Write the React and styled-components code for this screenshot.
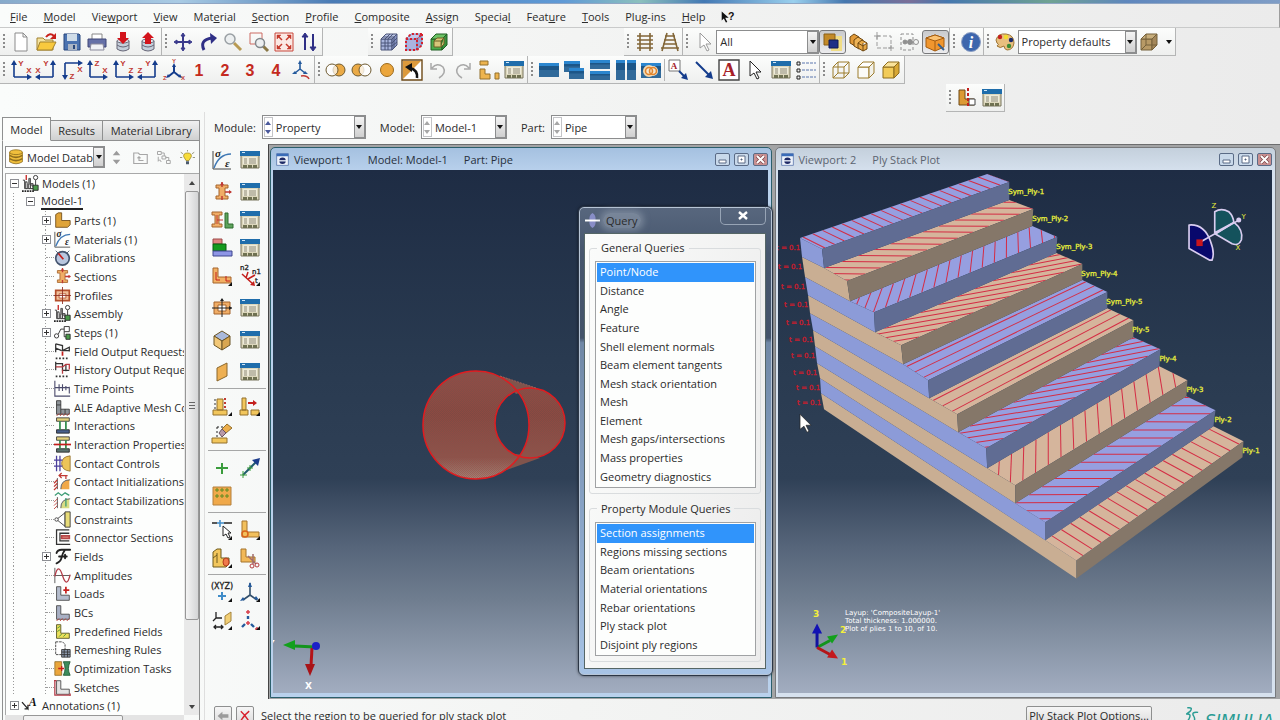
import styled, { createGlobalStyle, css } from "styled-components";

const GlobalStyle = createGlobalStyle`
  * { box-sizing: border-box; }
  body {
    margin: 0;
    overflow: hidden;
    font-family: "Open Sans", "Noto Sans", sans-serif;
    font-size: 11px;
    color: #2b2b2b;
  }
  button, select, legend {
    font: inherit;
    color: inherit;
    padding: 0;
    margin: 0;
    border: 0;
    background: none;
  }
  ul { list-style: none; margin: 0; padding: 0; }
  svg { display: block; flex: none; }
`;

/* ---------- icon drawings, all on a 20 x 20 grid ---------- */

const cube = (front, top, side, line) => (
  <g stroke={line} strokeLinejoin="round">
    <path d="M2 7h11v11H2z" fill={front} />
    <path d="M2 7l5-5h11l-5 5z" fill={top} />
    <path d="M13 7l5-5v11l-5 5z" fill={side} />
  </g>
);

const axes = (v, h, flip, down) => {
  const x = flip ? 17 : 3;
  const y = down ? 3 : 17;
  const d = flip ? -1 : 1;
  const e = down ? 1 : -1;
  return (
    <g>
      <path d={`M${x} ${y}v${e * 13}M${x} ${y}h${d * 14}`} stroke="#143c8c" strokeWidth="1.6" fill="none" />
      <path
        d={`M${x - 3} ${y + e * 12}h6l-3 ${e * 5}zM${x + d * 13} ${y - 3}v6l${d * 5} -3z`}
        fill="#143c8c"
      />
      <g fill="#c03a34" fontSize="8" fontWeight="bold" fontFamily="Liberation Sans, sans-serif" textAnchor="middle">
        <text x={x + d * 7} y={down ? 19 : 6}>{v}</text>
        <text x={x + d * 15} y={down ? 12 : 13}>{h}</text>
      </g>
    </g>
  );
};

const digit = (n) => (
  <text x="10" y="16" textAnchor="middle" fill="#c42a20" fontSize="16" fontWeight="bold" fontFamily="Liberation Sans, sans-serif">
    {n}
  </text>
);

const pane = (x, y, w, h) => (
  <g>
    <rect x={x} y={y} width={w} height={h} fill="#1c5688" />
    <rect x={x} y={y} width={w} height="3" fill="#2b86cf" />
    <rect x={x} y={y + h / 2} width={w} height={h / 2} fill="#3f78a6" opacity=".6" />
  </g>
);

const ell = (fill, line) => <path d="M3 2h5v10h10v6H3z" fill={fill} stroke={line} />;
const beam = <path d="M4 3h12v3h-3v8h3v3H4v-3h3V6H4z" fill="#f0ad66" stroke="#a5642c" />;
const ground = <path d="M3 20l3-3M7 20l3-3M11 20l3-3M15 20l3-3" stroke="#c03a34" />;
const more = <path d="M20 16v4h-4z" fill="#111" />;

const drawings = {
  file: <path d="M4 1h8l4 4v14H4zM12 1v4h4" fill="#fff" stroke="#8b8b8b" />,
  open: (
    <g>
      <path d="M1 6h6l2 2h8v10H1z" fill="#f4e3a0" stroke="#a1812f" />
      <path d="M4 10h16l-4 8H1z" fill="#f8c93e" stroke="#a1812f" />
      <path d="M10 5q4-5 8-1" stroke="#c8201c" strokeWidth="2" fill="none" />
      <path d="M20 1v6h-6z" fill="#c8201c" />
    </g>
  ),
  save: (
    <g>
      <path d="M2 2h15l1 1v15H2z" fill="#4a72b0" stroke="#28477c" />
      <path d="M5 2h10v7H5z" fill="#cfdce8" />
      <path d="M6 12h9v6H6z" fill="#a9b4c4" />
      <path d="M11 13h2v4h-2z" fill="#28477c" />
    </g>
  ),
  print: (
    <g>
      <path d="M5 2h10v6H5z" fill="#fff" stroke="#888" />
      <path d="M1 7h18v8H1z" fill="#6671a8" stroke="#3e4777" />
      <path d="M4 12h12l1 6H3z" fill="#f2f3f7" stroke="#8a8a9b" />
    </g>
  ),
  dbIn: (
    <g>
      <path d="M4 9v8q6 4 12 0V9" fill="#c5cfdb" stroke="#667" />
      <path d="M4 13q6 4 12 0" fill="none" stroke="#667" />
      <ellipse cx="10" cy="9" rx="6" ry="2" fill="#e5eaf0" stroke="#667" />
      <path d="M7 0h6v6h3l-6 6-6-6h3z" fill="#d3141c" />
    </g>
  ),
  dbOut: (
    <g>
      <path d="M4 9v8q6 4 12 0V9" fill="#c5cfdb" stroke="#667" />
      <path d="M4 13q6 4 12 0" fill="none" stroke="#667" />
      <ellipse cx="10" cy="9" rx="6" ry="2" fill="#e5eaf0" stroke="#667" />
      <path d="M7 12h6V6h3l-6-6-6 6h3z" fill="#d3141c" />
    </g>
  ),
  pan: (
    <g stroke="#3b3b8c" strokeWidth="2" fill="#3b3b8c">
      <path d="M10 3v14M3 10h14" />
      <path d="M10 1l2 3H8zM10 19l2-3H8zM1 10l3 2V8zM19 10l-3 2V8z" strokeWidth="1" />
    </g>
  ),
  rotate: (
    <g>
      <path d="M6 18Q1 8 14 6" stroke="#2f2f86" strokeWidth="3" fill="none" />
      <path d="M12 1l7 5-6 6z" fill="#2f2f86" />
    </g>
  ),
  zoom: (
    <g>
      <path d="M11 11l7 7" stroke="#b89a52" strokeWidth="3" />
      <circle cx="7" cy="7" r="5" fill="#eceff0" stroke="#9aa0a4" strokeWidth="1.5" />
    </g>
  ),
  zoomBox: (
    <g>
      <path d="M1 1h12v11H1z" fill="none" stroke="#cc6a62" />
      <path d="M14 14l5 5" stroke="#8a7846" strokeWidth="3" />
      <circle cx="11" cy="11" r="4.5" fill="#eceff0" stroke="#82888c" strokeWidth="1.5" />
    </g>
  ),
  fit: (
    <g>
      <path d="M1 1h18v18H1z" fill="#fbe9e4" stroke="#c8473a" />
      <g fill="#c53a2c" stroke="#c53a2c" strokeWidth="1.5">
        <path d="M8 8L4 4M12 8l4-4M8 12l-4 4M12 12l4 4" />
        <path d="M3 3h4L3 7zM17 3h-4l4 4zM3 17h4l-4-4zM17 17h-4l4-4z" strokeWidth=".5" />
      </g>
    </g>
  ),
  cycle: (
    <g stroke="#2f2f86" strokeWidth="2" fill="#2f2f86">
      <path d="M6 4v14M14 2v14" />
      <path d="M6 1l3 4H3zM14 19l3-4h-6z" strokeWidth="1" />
    </g>
  ),
  meshCube: (
    <g>
      {cube("#a8b4dc", "#bcc6e6", "#8794c4", "#4b5578")}
      <path d="M6 7v11M9 7v11M2 11h11l5-5M2 14h11l5-4M4 5h11v11M9 7l5-5M6 7l5-5" stroke="#4b5578" fill="none" />
    </g>
  ),
  nodeCube: (
    <g>
      {cube("#aab4e0", "#c2caec", "#98a3d4", "#7c86b8")}
      <path d="M2 7h11v11H2zM2 7l5-5h11l-5 5M18 2v11l-5 5" fill="none" stroke="#d5202c" strokeWidth="2" strokeDasharray="2 2" />
    </g>
  ),
  greenCube: (
    <g>
      {cube("#4cab4a", "#6cc265", "#3a8f3c", "#1f5f22")}
      <path d="M5 9h7v6H5zM5 9l3-3h7l-3 3M15 6v6l-3 3" fill="#d8c67a" stroke="#6e6125" />
    </g>
  ),
  ladder: <path d="M5 1v18M15 1v18M2 4h16M2 8h16M2 12h16M2 16h16" stroke="#826638" strokeWidth="1.6" />,
  ladderFar: <path d="M7 1L2 19M13 1l5 18M5 4h10M4 8h12M3 12h14M1 16h18" stroke="#826638" strokeWidth="1.6" />,
  pointer: <path d="M6 1v15l4-3 3 6 2-1-3-6h5z" fill="#fff" stroke="#9a9a9a" />,
  pointerDark: <path d="M5 1v15l4-3 3 6 2-1-3-6h5z" fill="#fff" stroke="#222" />,
  overlap: (
    <g>
      <path d="M8 8V4h11v15H8z" fill="#f0dd86" />
      <path d="M1 2h11v11H1z" fill="#c38a28" stroke="#8a5f17" />
      <path d="M6 8h9v8H6z" fill="#1f2f86" stroke="#111a55" />
    </g>
  ),
  boxes: (
    <g stroke="#6e4710">
      <path d="M1 5l4-3 5 3v6l-4 3-5-3z" fill="#e29a38" />
      <path d="M5 8l4-3 5 3v6l-4 3-5-3z" fill="#eeb458" />
      <path d="M9 11l4-3 5 3v6l-4 2-5-3zM9 11l5 3 4-3M14 14v5" fill="#e8a846" />
    </g>
  ),
  selRect: (
    <g>
      <path d="M3 4h14v12H3z" fill="none" stroke="#9b9b9b" strokeDasharray="4 2" />
      <path d="M3 0v7M0 4h6M17 13v6M14 16h6" stroke="#9b9b9b" />
    </g>
  ),
  selShapes: (
    <g fill="#8f8f8f" stroke="#8f8f8f">
      <path d="M2 2h12v16H2z" fill="none" strokeDasharray="3 2" />
      <circle cx="6" cy="10" r="2" />
      <circle cx="11" cy="10" r="2.5" />
      <circle cx="17" cy="10" r="2.5" fill="none" />
    </g>
  ),
  orangeBox: (
    <g stroke="#a45c10">
      <path d="M1 6l9-3 9 3v9l-9 4-9-4z" fill="#f0962e" />
      <path d="M1 6l9-3 9 3-9 3z" fill="#fbc272" />
      <path d="M10 9v10" />
      <path d="M13 12l6 6" stroke="#355f8e" strokeWidth="2" />
    </g>
  ),
  info: (
    <g>
      <circle cx="10" cy="10" r="9.5" fill="#3d66ad" stroke="#8da0c4" />
      <text x="10" y="16" textAnchor="middle" fill="#fff" fontSize="16" fontStyle="italic" fontWeight="bold" fontFamily="Liberation Serif, serif">i</text>
    </g>
  ),
  palette: (
    <g>
      <path d="M1 8Q3 1 11 2q8 1 8 9-1 7-7 7-3-1-3-4-4 3-7 0 3-2 0-3z" fill="#e8bf7e" stroke="#9c7434" />
      <circle cx="5" cy="5" r="2.2" fill="#c41f1c" />
      <circle cx="11" cy="5" r="2.2" fill="#f2dc2c" />
      <circle cx="16" cy="8" r="2.2" fill="#1b2a6b" />
      <circle cx="14" cy="14" r="2.2" fill="#3c8c34" />
    </g>
  ),
  tanCube: (
    <g>
      {cube("#b89a66", "#c8ae7c", "#a4875a", "#74603a")}
      <path d="M7 2v11h11M7 13l-5 5" stroke="#74603a" fill="none" />
    </g>
  ),
  triad: (
    <g>
      <path d="M10 12V6M10 12l-5 4M10 12l5 4" stroke="#143c8c" strokeWidth="2" />
      <path d="M10 3l2 4H8zM2 18l2-4 2 3zM18 18l-2-4-2 3z" fill="#143c8c" />
      <g fill="#c03a34" fontSize="6" fontWeight="bold" fontFamily="Liberation Sans, sans-serif">
        <text x="8" y="3">Y</text>
        <text x="-1" y="20">Z</text>
        <text x="17" y="20">X</text>
      </g>
    </g>
  ),
  triadTurn: (
    <g>
      <path d="M9 9V3M9 9l-5 4M9 9l5 4" stroke="#245a9c" strokeWidth="1.6" />
      <path d="M9 0l2 4H7zM1 14l3-3 2 3zM17 14l-3-3-2 3z" fill="#245a9c" />
      <path d="M10 16q6-1 8 3" stroke="#c03a34" strokeWidth="1.6" fill="none" />
    </g>
  ),
  union: (
    <g stroke="#6e5a30">
      <circle cx="13" cy="10" r="6" fill="#eaaa46" />
      <circle cx="6" cy="10" r="6" fill="#fff" fillOpacity=".7" />
    </g>
  ),
  minus: (
    <g stroke="#6e5a30">
      <circle cx="7" cy="10" r="6" fill="#eaaa46" />
      <circle cx="14" cy="10" r="6" fill="#fff" fillOpacity=".8" />
    </g>
  ),
  disc: <circle cx="10" cy="10" r="6.5" fill="#eba63c" stroke="#9c6a1c" />,
  invert: (
    <g>
      <path d="M0 0h20v20H0z" fill="#fff" stroke="#6e4a18" strokeWidth="1.4" />
      <path d="M1 1h18L1 19z" fill="#dc9a3c" />
      <path d="M15 18q1-8-7-10" stroke="#111" strokeWidth="2.6" fill="none" />
      <path d="M3 7l7-4v9z" fill="#111" />
    </g>
  ),
  undo: <path d="M3 3v6h6M4 8q5-6 11-1 4 6-4 11" stroke="#a9a9a9" strokeWidth="1.5" fill="none" />,
  redo: <path d="M17 3v6h-6M16 8Q11 2 5 7q-4 6 4 11" stroke="#a9a9a9" strokeWidth="1.5" fill="none" />,
  parts: <path d="M1 1h8v4H1zM1 9h5v5h5v5H1zM16 13h4v6h-4z" fill="#edb44e" stroke="#93702c" />,
  table: (
    <g>
      <path d="M1 2h18v16H1z" fill="#dcd7bc" stroke="#79745c" />
      <path d="M0 1h20v5H0z" fill="#1f6dab" />
      <path d="M2 2h3v1H2z" fill="#cfe6f8" />
      <path d="M3 7h14v7H3z" fill="#eeebda" />
      <path d="M4 9h3M9 9h7M4 11h3M9 11h7M4 13h3M9 13h7" stroke="#8f8b78" />
      <path d="M3 15h4v3H3zM8 15h4v3H8zM13 15h4v3h-4z" fill="#6f7152" />
    </g>
  ),
  pane1: pane(0, 3, 20, 14),
  pane2: <g>{pane(0, 1, 16, 11)}{pane(5, 8, 15, 11)}</g>,
  pane3: <g>{pane(0, 0, 20, 9)}{pane(0, 11, 20, 9)}</g>,
  pane4: <g>{pane(0, 0, 9, 20)}{pane(11, 0, 9, 20)}</g>,
  linkPane: (
    <g>
      {pane(0, 3, 20, 15)}
      <circle cx="8" cy="11" r="5" fill="#f3e6d0" stroke="#f3d9b0" strokeWidth="2" />
      <circle cx="12" cy="11" r="5" fill="#f3e6d0" />
      <circle cx="8" cy="11" r="3.5" fill="none" stroke="#e2852c" strokeWidth="1.6" />
      <circle cx="12" cy="11" r="3.5" fill="none" stroke="#e2852c" strokeWidth="1.6" />
    </g>
  ),
  noteArrow: (
    <g>
      <path d="M1 0h11v11H1z" fill="#fff" stroke="#777" />
      <text x="6" y="9" textAnchor="middle" fontSize="9" fontWeight="bold" fill="#a62028" fontFamily="Liberation Serif, serif">A</text>
      <path d="M11 11l5 5" stroke="#143c8c" strokeWidth="2" />
      <path d="M20 20l-7-2 5-5z" fill="#143c8c" />
    </g>
  ),
  arrow: (
    <g>
      <path d="M2 2l13 13" stroke="#143c8c" strokeWidth="2" />
      <path d="M19 19l-8-2 6-6z" fill="#143c8c" />
    </g>
  ),
  letter: (
    <g>
      <path d="M0 0h20v20H0z" fill="#fff" stroke="#444" strokeWidth="1.4" />
      <text x="10" y="16" textAnchor="middle" fontSize="18" fontWeight="bold" fill="#a62028" fontFamily="Liberation Serif, serif">A</text>
    </g>
  ),
  legend: (
    <g>
      <path d="M1 2h3v3H1zM1 9h3v3H1zM1 16h3v3H1z" fill="#eee" stroke="#222" />
      <path d="M6 3h14M6 10h14M6 17h14" stroke="#5b76ae" strokeDasharray="3 1" />
    </g>
  ),
  wire: (
    <g stroke="#9c7c2c" fill="none">
      <path d="M2 7h11v11H2zM2 7l5-5h11l-5 5M18 2v11l-5 5M7 2v11h11M7 13l-5 5" />
    </g>
  ),
  hidden: cube("#fbfbf8", "#fff", "#f2f1ea", "#9c7c2c"),
  shaded: cube("#f2cb58", "#fae39a", "#d8a836", "#8d6c1c"),
  partAxis: (
    <g>
      <path d="M2 2h6v9h9v6H2z" fill="#dc9a34" stroke="#6e4a18" />
      <path d="M12 11h6v6h-6z" fill="#fff" stroke="#444" />
      <path d="M11 0v20" stroke="#c41f1c" strokeWidth="2" strokeDasharray="3 2" />
    </g>
  ),
  database: (
    <g fill="#f0bf3c" stroke="#8d6c1c">
      <path d="M2 4v12q8 5 16 0V4" />
      <path d="M2 8q8 5 16 0M2 12q8 5 16 0" fill="none" strokeWidth="2" />
      <ellipse cx="10" cy="4" rx="8" ry="3" />
    </g>
  ),
  updown: <path d="M10 1l5 6H5zM10 19l5-6H5z" fill="#9b9b9b" />,
  folderUp: (
    <g fill="none" stroke="#a6a6a6" strokeWidth="1.5">
      <path d="M1 4h6l2 2h10v12H1z" />
      <path d="M14 14H8V9M6 11l2-2 2 2" />
    </g>
  ),
  links: (
    <g fill="none" stroke="#a6a6a6" strokeWidth="1.3">
      <path d="M2 2h5v4H2zM8 8h5v4H8zM14 14h5v4h-5zM7 4h4v4M13 10h4v4M3 9v6l2-2 2 3" />
    </g>
  ),
  bulb: (
    <g>
      <path d="M10 4q6 0 5 5l-3 5H8L5 9q-1-5 5-5z" fill="#f7dc3a" stroke="#9c8420" />
      <path d="M8 15h4v4H8z" fill="#4b5a6c" />
      <path d="M10 0v2M1 3l3 2M19 3l-3 2M0 10h3M17 10h3" stroke="#7a7a5c" />
    </g>
  ),
  models: (
    <g>
      <path d="M5 0v6" stroke="#c41f1c" strokeWidth="1.5" />
      <path d="M1 6h2v10h12M4 8h2v8H4zM8 4h2v12H8zM10 10h3v6h-3z" fill="#888" stroke="#444" />
      <path d="M0 19h14" stroke="#222" strokeWidth="2" strokeDasharray="2 1" />
      <circle cx="16" cy="3" r="2.5" fill="#fff" stroke="#222" />
      <path d="M16 6v6" stroke="#222" />
      <path d="M13 12h6v6h-6z" fill="#4b9a4b" stroke="#222" />
    </g>
  ),
  partL: <path d="M2 3l3-2h4v9h10v5l-3 3H2z" fill="#dfa43a" stroke="#6e4a18" />,
  stress: (
    <g>
      <path d="M1 1v18h18" stroke="#444" fill="none" />
      <path d="M2 18Q7 4 19 4" stroke="#3f78b4" strokeWidth="1.5" fill="none" />
      <g fontSize="11" fontStyle="italic" fontWeight="bold" fill="#222" fontFamily="Liberation Serif, serif">
        <text x="3" y="7">σ</text>
        <text x="13" y="17">ε</text>
      </g>
    </g>
  ),
  gauge: (
    <g>
      <circle cx="10" cy="11" r="8" fill="#b8c6de" stroke="#44546e" strokeWidth="2" />
      <path d="M5 5l6 7" stroke="#c41f1c" strokeWidth="2" />
      <path d="M2 2l3 3M18 2l-3 3" stroke="#44546e" />
    </g>
  ),
  section: (
    <g>
      {beam}
      <path d="M10 0v5M13 10h6M10 14v4" stroke="#c03a34" strokeWidth="1.5" />
      <path d="M10 0l2 3H8zM20 10l-3-2v4z" fill="#c03a34" />
    </g>
  ),
  sectionL: (
    <g>
      <path d="M0 2h10v3H7v9h3v3H0v-3h3V5H0z" fill="#f0ad66" stroke="#a5642c" />
      <path d="M5 5v9M5 10h6" stroke="#c03a34" />
      <path d="M13 3h3v11h5v4h-8z" fill="#5da35c" stroke="#2e6c2e" />
    </g>
  ),
  layers: (
    <g>
      <path d="M1 1h9v5H1z" fill="#e08482" stroke="#9c4a48" />
      <path d="M1 6h13v7H1z" fill="#159a1e" stroke="#0b5c12" />
      <path d="M1 13h19v5H1z" fill="#8e96e6" stroke="#3e468e" />
    </g>
  ),
  orient: (
    <g>
      <path d="M1 2h5v9h13v6H1z" fill="#f2b064" stroke="#a5642c" />
      <path d="M4 6v8M4 14h4M14 10v5h4" stroke="#c41f1c" fill="none" />
      {more}
    </g>
  ),
  tangent: (
    <g>
      <path d="M2 8l11 10M6 12l2-6M8 13l7-4" stroke="#c41f1c" strokeWidth="1.5" />
      <path d="M15 20l-5-1 4-4z" fill="#c41f1c" />
      <g fontSize="7" fill="#222" stroke="#222" strokeWidth=".3" fontFamily="DejaVu Sans, sans-serif">
        <text x="0" y="4">n2</text>
        <text x="12" y="8">n1</text>
        <text x="15" y="17">t</text>
      </g>
      {more}
    </g>
  ),
  profile: (
    <g>
      <path d="M2 4h16v12H2z" fill="#f0ad66" stroke="#a5642c" />
      <path d="M6 7h8v6H6z" fill="#fff" stroke="#a5642c" />
      <path d="M10 1v18M0 10h20" stroke="#222" />
      <path d="M10 0l2 3H8zM20 10l-3-2v4z" fill="#222" />
    </g>
  ),
  profileRed: (
    <g>
      <path d="M2 4h16v12H2z" fill="#f0c09c" stroke="#b4502c" strokeWidth="2" />
      <path d="M6 8h8v5H6z" fill="#fff" stroke="#b4502c" />
      <path d="M10 0v20M0 10h20" stroke="#8c2c20" />
    </g>
  ),
  steps: (
    <g fill="#fff" stroke="#222">
      <circle cx="3" cy="14" r="2.5" />
      <path d="M5 12l3-6h4M12 3h6v6h-6z" />
      <path d="M14 12h5v6h-5z" fill="#4b9a4b" />
      <path d="M12 9v6h2" fill="none" />
    </g>
  ),
  output: (
    <g>
      <path d="M2 1v10M2 1l8 2v6l8 0M2 6l7 3M10 9l8-4v5" stroke="#333" fill="none" strokeWidth="1.5" />
      <path d="M10 10v5" stroke="#c41f1c" strokeWidth="2" />
      <path d="M2 18h16" stroke="#333" strokeWidth="2" strokeDasharray="2 2" />
    </g>
  ),
  outputRed: (
    <g>
      <path d="M2 1v10M2 3h8v8h8M14 4v8" stroke="#333" fill="none" strokeWidth="1.5" />
      <path d="M2 7h8l4-3h4v6M10 10v5" stroke="#b83a40" strokeWidth="1.5" fill="none" />
      <path d="M2 18h16" stroke="#333" strokeWidth="2" strokeDasharray="2 2" />
    </g>
  ),
  timePoints: <path d="M1 1v18h18M1 9h17M6 5v8M10 5v8M14 7v5M18 8v8" stroke="#4b4b6c" fill="none" strokeWidth="1.3" />,
  ale: <g>{ell("#8f959a", "#333")}<path d="M3 7h5M8 12v6M13 12v6" stroke="#333" />{ground}</g>,
  interact: (
    <g>
      <path d="M3 1h15v4H3z" fill="#e4d27c" stroke="#333" />
      <path d="M3 15h15v4H3z" fill="#48608c" stroke="#222" />
      <path d="M7 5v10M14 5v10" stroke="#2f8c4a" strokeWidth="2" />
    </g>
  ),
  interactProp: (
    <g>
      <path d="M3 1h15v4H3z" fill="#e4d27c" stroke="#333" />
      <path d="M3 15h15v4H3z" fill="#5c7470" stroke="#222" />
      <path d="M7 5v10M14 5v10" stroke="#2f8c4a" strokeWidth="2" />
      <path d="M0 10h20" stroke="#c41f1c" strokeWidth="2" />
    </g>
  ),
  contact: (
    <g>
      <path d="M19 1q-10 1-10 9t10 9z" fill="#ecc458" stroke="#93702c" />
      <path d="M3 1v18M7 1v18M0 6h10M0 13h10" stroke="#4b3f9c" strokeWidth="1.5" />
    </g>
  ),
  contactInit: (
    <g>
      <path d="M18 8q-9 1-10 11h10z" fill="#f0a848" />
      <path d="M8 19Q8 8 19 8M4 6v13" stroke="#444" fill="none" />
      <path d="M0 12l4-4M0 16l4-4M0 20l4-4M16 3H6M9 0L6 3l3 3M14 3v4" stroke="#c03a34" fill="none" strokeWidth="1.5" />
    </g>
  ),
  contactStab: (
    <g>
      <path d="M18 8q-9 1-10 11h10z" fill="#d8dc84" />
      <path d="M8 19Q8 8 19 8M4 6v13" stroke="#444" fill="none" />
      <path d="M0 12l4-4M0 16l4-4M0 20l4-4" stroke="#c03a34" />
      <path d="M1 4l4-3 4 3 4-3 5 3M14 7v10" stroke="#3c9c74" strokeWidth="1.5" fill="none" />
    </g>
  ),
  constraint: (
    <g fill="#fff" stroke="#333">
      <path d="M3 10l10-8v16z" />
      <path d="M13 1h6v18h-6z" fill="#e8dc78" />
      <circle cx="3" cy="10" r="2" />
    </g>
  ),
  connector: (
    <g fill="none" stroke="#333" strokeWidth="1.5">
      <path d="M18 1H3v17h16M18 5H7v9h11" />
      <path d="M9 8h9v3H9z" stroke="#b84848" strokeWidth="2" fill="#e8a090" />
    </g>
  ),
  fields: (
    <path
      d="M3 6q1-4 6-4h10M13 2q-3 4-4 9t-6 7M6 10h9M13 8v4"
      fill="none" stroke="#222" strokeWidth="2.2" strokeLinecap="round"
    />
  ),
  amplitude: (
    <g fill="none">
      <path d="M1 1v18M1 10h18" stroke="#444" />
      <path d="M1 11Q5-6 10 10t9-1" stroke="#b43c48" strokeWidth="1.5" />
    </g>
  ),
  load: <g>{ell("#b4bccc", "#444")}<path d="M14 2v8M11 6h7" stroke="#c41f1c" strokeWidth="2" /></g>,
  bc: <g>{ell("#a8b0c4", "#444")}{ground}</g>,
  predefined: <g>{ell("#ece05c", "#4c4c1c")}<path d="M4 6l3-2M4 10l3-2M6 16l3-3M11 16l3-3" stroke="#3c8c34" /></g>,
  remesh: (
    <g>
      <path d="M2 1h8l3 3v12H2z" fill="#fff" stroke="#333" strokeDasharray="3 1" />
      <path d="M9 10h10v9H9z" fill="#8b98ac" stroke="#333" />
      <path d="M12 10v9M16 10v9M9 13h10M9 16h10" stroke="#333" />
    </g>
  ),
  optimize: (
    <g>
      <path d="M1 2h8v16H1z" fill="#eba63c" stroke="#93702c" />
      <path d="M11 2h8q-4 8 0 16h-8q4-8 0-16z" fill="#3c8c5c" stroke="#1f5c34" />
      <path d="M5 10h7M9 7v6" stroke="#c41f1c" strokeWidth="1.5" />
    </g>
  ),
  sketch: (
    <g>
      {ell("#e4e4e4", "#444")}
      <path d="M1 2v17h18M0 2h3M19 17v3" stroke="#b43c48" strokeWidth="1.5" fill="none" />
    </g>
  ),
  annotation: (
    <g>
      <path d="M0 6l7 8V9M7 14H3" stroke="#222" strokeWidth="1.5" fill="none" />
      <text x="8" y="11" fontSize="14" fontStyle="italic" fontWeight="bold" fill="#111" fontFamily="Liberation Serif, serif">A</text>
    </g>
  ),
  solid: (
    <g stroke="#6b5526">
      <path d="M2 6l8-5 8 5-8 5z" fill="#a9b9dc" />
      <path d="M2 6l8 5v9l-8-5z" fill="#f2c878" />
      <path d="M18 6l-8 5v9l8-5z" fill="#d8a650" />
    </g>
  ),
  shell: <path d="M5 6l10-5v13L5 19z" fill="#eeb053" stroke="#8a672c" />,
  stringer: (
    <g>
      <path d="M1 14h14v5H1zM5 3h6v11H5z" fill="#f2c65c" stroke="#93702c" />
      <path d="M13 2v11" stroke="#c03a34" strokeWidth="2" strokeDasharray="2 2" />
      <path d="M3 3v11" stroke="#333" strokeDasharray="2 2" />
      {more}
    </g>
  ),
  stringerMove: (
    <g>
      <path d="M0 14h8v5H0zM2 2h4v12H2zM11 14h8v5h-8z" fill="#f2c65c" stroke="#93702c" />
      <path d="M8 7h6" stroke="#c41f1c" strokeWidth="2" />
      <path d="M17 7l-4-3v6z" fill="#c41f1c" />
      {more}
    </g>
  ),
  eraser: (
    <g>
      <path d="M0 14h15v5H0z" fill="#f2c65c" stroke="#93702c" />
      <path d="M5 3v11M5 3h6" stroke="#222" strokeDasharray="2 2" fill="none" />
      <path d="M15 0l5 4-6 5-4-4z" fill="#ecae4c" stroke="#93702c" />
      <path d="M10 5l4 4-4 4-3-4z" fill="#b899a8" stroke="#6c5460" />
    </g>
  ),
  plus: <path d="M10 5v11M4 10h12" stroke="#3a9c3c" strokeWidth="2" />,
  datumAxis: (
    <g>
      <path d="M3 17L16 4" stroke="#205c6c" strokeWidth="2" />
      <path d="M20 0l-2 8-6-6z" fill="#1c3c8c" />
      <path d="M3 13v7M0 17h7M10 7v6M7 10h6" stroke="#3a9c3c" />
    </g>
  ),
  gridPlane: (
    <g>
      <path d="M1 1h18v18H1z" fill="#f0a94a" stroke="#b4803c" />
      <path d="M5 2v4M3 4h4M10 2v4M8 4h4M15 2v4M13 4h4M5 8v4M3 10h4M10 8v4M8 10h4M15 8v4M13 10h4" stroke="#5f8c20" />
    </g>
  ),
  axisPointer: (
    <g>
      <path d="M0 3h5M12 3h8" stroke="#222" strokeWidth="1.5" />
      <path d="M8 0v7M5 3h7" stroke="#3f8cc8" strokeWidth="1.5" />
      <path d="M11 6v10l3-2 2 4 2-1-2-4h3z" fill="#fff" stroke="#222" />
      {more}
    </g>
  ),
  partitionEdge: (
    <g>
      <path d="M2 1h5v11h12v5H2z" fill="#f2c05c" stroke="#a5742c" />
      <circle cx="5" cy="14" r="3" fill="none" stroke="#d8641c" strokeWidth="1.5" />
      {more}
    </g>
  ),
  partitionFace: (
    <g>
      <path d="M1 4l4-3h4v9h8v6l-3 3H1z" fill="#f2c65c" stroke="#6e5a1c" />
      <path d="M5 5v10M1 10l4-3" stroke="#6e5a1c" />
      <ellipse cx="14" cy="14" rx="3" ry="4" fill="#f07a4c" stroke="#b43c1c" />
      {more}
    </g>
  ),
  partitionCut: (
    <g>
      <path d="M1 1h5v8h9v5H1z" fill="#f2b858" stroke="#a5742c" />
      <path d="M8 8l8 8M13 6v10" stroke="#a06c6c" strokeWidth="1.5" />
      <circle cx="12" cy="18" r="2" fill="none" stroke="#b43c3c" />
      <circle cx="17" cy="17" r="2" fill="none" stroke="#b43c3c" />
    </g>
  ),
  xyz: (
    <g>
      <text x="10" y="7" textAnchor="middle" fontSize="8" fill="#222" stroke="#222" strokeWidth=".3" fontFamily="DejaVu Sans, sans-serif">(XYZ)</text>
      <path d="M10 10v8M6 14h8" stroke="#3f8cc8" strokeWidth="2" />
      {more}
    </g>
  ),
  csys: (
    <g>
      <path d="M10 1v12M10 13l-7 5M10 13l7 5" stroke="#33506c" strokeWidth="1.6" />
      <path d="M10 0l2 5H8zM0 19l3-4 2 3zM19 18l-3-4-2 3z" fill="#245a9c" />
      {more}
    </g>
  ),
  planeOffset: (
    <g>
      <path d="M4 2v6h6M4 8l-3 3M2 17h9M4 15l-2 2 2 2M9 15l2 2-2 2" stroke="#222" strokeWidth="1.3" fill="none" />
      <path d="M13 6l6-4v9l-6 4z" fill="#f2cf74" stroke="#a5843c" />
      {more}
    </g>
  ),
  csysPoints: (
    <g>
      <path d="M8 0v4M6 2h4M8 11v4M6 13h4M15 19h4M17 17v3" stroke="#d8404c" strokeWidth="1.5" />
      <path d="M8 6v3M5 14l-3 3M11 14l3 3" stroke="#245a9c" strokeWidth="2.4" />
      {more}
    </g>
  ),
  viewport: (
    <g>
      <path d="M1 1h18v18H1z" fill="#eef3fb" stroke="#3c5c9c" />
      <path d="M1 1h18v4H1z" fill="#3a6cb8" />
      <circle cx="10" cy="12" r="5" fill="#1f2a66" />
      <path d="M4 12h12" stroke="#eef3fb" strokeWidth="2" />
    </g>
  ),
  query: (
    <g>
      <path d="M10 0q5 3 4 10q1 7-4 10q-5-3-4-10Q5 3 10 0z" fill="#8e92cf" opacity=".9" />
      <path d="M0 10h20" stroke="#fff" strokeWidth="2.6" />
    </g>
  ),
  back: <path d="M1 10l8-7v4h10v6H9v4z" fill="#9b9b9b" />,
  cancel: <path d="M3 2q6 5 13 16M17 2Q9 8 3 18" stroke="#d8202c" strokeWidth="2.4" fill="none" />,
  help: (
    <g>
      <path d="M1 2v13l3-3 3 6 2-1-3-6h5z" fill="#111" />
      <text x="10" y="14" fontSize="15" fontWeight="bold" fill="#111" fontFamily="Liberation Sans, sans-serif">?</text>
    </g>
  ),
  xy: axes("Y", "X"),
  yx: axes("Y", "X", true),
  xz: axes("Z", "X", false, true),
  zx: axes("Z", "X"),
  yz: axes("Y", "Z"),
  zy: axes("Y", "Z", true),
  one: digit(1),
  two: digit(2),
  three: digit(3),
  four: digit(4),
};

const Icon = ({ name, size = 20 }) => (
  <svg width={size} height={size} viewBox="0 0 20 20" overflow="visible" aria-hidden="true">
    {drawings[name]}
  </svg>
);

/* ---------- frame ---------- */

const Window = styled.div`
  display: flex;
  flex-direction: column;
  height: 100vh;
  overflow: hidden;
  background: linear-gradient(90deg, #fafcfb 0%, #f3f4f3 45%, #ebebeb 100%);
`;

const TitleStrip = styled.div`
  flex: none;
  height: 4px;
  border-bottom: 1px solid #90a6c4;
  background: linear-gradient(90deg, #86aacb, #a9cbe4 14%, #4a7cb5 26%, #5f9ad6 44%, #8cc0bd 50%, #4379b4 55%, #9ad0ee 62%, #4577ae 66%, #7a6f98 71%, #4577ae 74%, #6fa292 82%, #5f87bd 88%, #7f9dc6);
`;

const MenuBar = styled.nav`
  display: flex;
  flex: none;
  align-items: center;
  height: 24px;
  padding: 2px 0 0 2px;
  border-right: 1px solid #9d9d9d;
  border-bottom: 1px solid #c9caca;
`;

const MenuItem = styled.button`
  padding: 0 8px;
  line-height: 16px;
  white-space: nowrap;
`;

const ToolRow = styled.div`
  display: flex;
  flex: none;
  height: 28px;
`;

const ToolGroup = styled.div`
  display: flex;
  flex: none;
  align-items: center;
  width: ${(p) => p.$width}px;
  margin-left: ${(p) => p.$gap || 0}px;
  border-right: 1px solid #b4b5b5;
  border-bottom: 1px solid #b4b5b5;
  background: linear-gradient(#fcfdfc, #eeefee);
`;

const Grip = styled.span`
  flex: none;
  width: 2px;
  height: 16px;
  margin: 0 3px;
  background: repeating-linear-gradient(#8b8b8b 0 2px, transparent 2px 4px);
`;

const ToolButton = styled.button`
  display: grid;
  place-items: center;
  flex: ${(p) => (p.$narrow ? 1 : 2)};
  min-width: 0;
  height: 24px;
  ${(p) =>
    p.$on &&
    css`
      border: 1px solid #77787a;
      border-radius: 3px;
      background: linear-gradient(#c9cacc, #ececee);
    `}
`;

const Divider = styled.span`
  width: 1px;
  height: 22px;
  background: #b4b5b5;
`;

const Caret = styled.span`
  border: 3px solid transparent;
  border-top: 4px solid #111;
  border-bottom: 0;
`;

const ComboBox = styled.span`
  display: flex;
  flex: none;
  align-items: center;
  width: ${(p) => p.$width}px;
  height: 24px;
  border: 1px solid #8c8d8e;
  background: #fff;

  select {
    flex: 1;
    min-width: 0;
    height: 100%;
    padding-left: 3px;
    appearance: none;
    outline: 0;
  }
`;

const ComboArrow = styled.span`
  display: grid;
  place-items: center;
  flex: none;
  width: 11px;
  height: 100%;
  border: 1px solid #8c8d8e;
  background: linear-gradient(#f4f4f4, #cfcfcf);
`;

const Spinner = styled.span`
  display: grid;
  place-items: center;
  align-content: center;
  gap: 5px;
  flex: none;
  width: 9px;
  height: 20px;
  margin-left: 1px;
  border: 1px solid #c4c5c8;

  &::before,
  &::after {
    content: "";
    border: 3px solid transparent;
  }
  &::before {
    border-top: 0;
    border-bottom: 4px solid ${(p) => (p.$live ? "#4b5a9c" : "#a6a6a6")};
  }
  &::after {
    border-bottom: 0;
    border-top: 4px solid ${(p) => (p.$live ? "#4b5a9c" : "#a6a6a6")};
  }
`;

const Workspace = styled.div`
  display: flex;
  flex: 1;
  min-height: 0;
`;

/* ---------- model tree ---------- */

const SidePanel = styled.aside`
  display: flex;
  flex-direction: column;
  flex: none;
  width: 205px;
  padding: 5px 4px 0 2px;
  border-right: 1px solid #dedede;
`;

const Tabs = styled.div`
  display: flex;
  flex: none;
  align-items: flex-end;
  height: 24px;
`;

const Tab = styled.button`
  flex: 1 1 auto;
  height: ${(p) => (p.$active ? 24 : 21)}px;
  border: 1px solid #8f9090;
  border-left-width: ${(p) => (p.$active ? 1 : 0)}px;
  border-bottom-color: ${(p) => (p.$active ? "transparent" : "#8f9090")};
  background: ${(p) => (p.$active ? "#fcfdfc" : "linear-gradient(#f0f0f0, #cfd0d0)")};
  white-space: nowrap;
`;

const TabBody = styled.div`
  display: flex;
  flex-direction: column;
  flex: 1;
  min-height: 0;
  padding-left: 2px;
  border: 1px solid #8f9090;
  border-width: 0 1px;
`;

const TreeTools = styled.div`
  display: flex;
  flex: none;
  align-items: center;
  height: 32px;
`;

const DatabaseCombo = styled(ComboBox)`
  height: 22px;
  padding-left: 2px;
`;

const TreeFrame = styled.div`
  display: flex;
  flex: 1;
  min-height: 0;
  border-top: 1px solid #a8a9a9;
  border-left: 1px solid #a8a9a9;
  background: #fdfefd;
`;

const Tree = styled.ul`
  display: grid;
  grid-auto-rows: minmax(0, 1fr);
  flex: 1;
  min-width: 0;
  overflow: hidden;
`;

const TreeRow = styled.li`
  display: flex;
  align-items: center;
  min-width: 0;
  white-space: nowrap;
`;

const TreeLabel = styled.span`
  margin-left: 3px;
  line-height: 15px;
  ${(p) => p.$current && "border-bottom: 2px solid #222;"}
`;

const Rail = styled.span`
  display: flex;
  align-items: center;
  justify-content: center;
  flex: none;
  align-self: stretch;
  width: 16px;
  background: ${(p) =>
    p.$line
      ? "repeating-linear-gradient(#9b9b9b 0 1px, transparent 1px 3px) 7px 0 / 1px 100% no-repeat"
      : "none"};
`;

const Branch = styled.span`
  width: 8px;
  margin-left: 8px;
  border-top: 1px dotted #9b9b9b;
`;

const Expander = styled.button`
  display: grid;
  place-items: center;
  width: 9px;
  height: 9px;
  border: 1px solid #8d8f94;
  background:
    linear-gradient(#333, #333) center / 5px 1px no-repeat,
    ${(p) => (p.$open ? "" : "linear-gradient(#333, #333) center / 1px 5px no-repeat,")}
    linear-gradient(#fff, #fff);
`;

const VScroll = styled.div`
  display: flex;
  flex-direction: column;
  align-items: center;
  flex: none;
  width: 15px;
  background: #e9e9e9;
`;

const ScrollEnd = styled.button`
  flex: none;
  display: grid;
  place-items: center;
  width: 15px;
  height: 17px;

  &::before {
    content: "";
    border: 3px solid transparent;
    ${(p) => (p.$down ? "border-bottom: 0; border-top: 4px solid #444;" : "border-top: 0; border-bottom: 4px solid #444;")}
  }
`;

const Thumb = styled.div`
  display: grid;
  place-items: center;
  flex: 428;
  width: 14px;
  border: 1px solid #979797;
  border-radius: 2px;
  background: linear-gradient(90deg, #f4f4f4, #d4d5d6);

  &::before {
    content: "";
    width: 6px;
    height: 7px;
    background: repeating-linear-gradient(#666 0 1px, transparent 1px 3px);
  }
`;

const Track = styled.div`
  flex: 78;
`;

const HScroll = styled.div`
  flex: none;
  height: 5px;
  margin-right: 15px;
  padding: 0 61px 0 18px;
  background: #e4e4e4;

  &::before {
    content: "";
    display: block;
    height: 8px;
    border: 1px solid #979797;
    border-radius: 2px;
    background: #f1f1f1;
  }
`;

/* ---------- module area ---------- */

const ModuleArea = styled.main`
  display: flex;
  flex-direction: column;
  flex: 1;
  min-width: 0;
`;

const ContextBar = styled.div`
  display: flex;
  flex: none;
  align-items: center;
  gap: 14px;
  height: 32px;
  padding: 0 0 2px 9px;
`;

const Field = styled.label`
  display: flex;
  align-items: center;
  gap: 6px;
`;

const ModuleBody = styled.div`
  display: flex;
  flex: 1;
  min-height: 0;
`;

const Toolbox = styled.div`
  display: flex;
  flex-direction: column;
  gap: 4px;
  flex: none;
  width: 63px;
  padding: 4px 2px 0 3px;
`;

const ToolboxGroup = styled.div`
  display: grid;
  grid-template-columns: 28px 28px;
  grid-auto-rows: 28px;
  ${(p) => p.$ruled && "border-top: 1px solid #a6a7a7; padding-top: 5px; margin-top: -4px;"}
`;

const Desktop = styled.div`
  position: relative;
  display: flex;
  gap: 3px;
  flex: 1;
  min-width: 0;
  padding: 2px 4px 1px 1px;
  border-top: 1px solid #6c6d6e;
  border-left: 1px solid #444;
  background: #a3a4a5;
`;

const Viewport = styled.section`
  display: flex;
  flex-direction: column;
  flex: 1;
  min-width: 0;
  padding: 0 3px 4px 2px;
  border: 1px solid ${(p) => (p.$active ? "#2c5f6c" : "#77797c")};
  border-radius: 5px 5px 0 0;
  background: ${(p) => (p.$active ? "linear-gradient(#a5c1e0, #b9d1ec 24px)" : "linear-gradient(#c4d0dc, #d6e1ee 24px)")};
`;

const ViewportTitle = styled.header`
  display: flex;
  flex: none;
  align-items: center;
  gap: 16px;
  height: 22px;
  padding-left: 3px;
  color: ${(p) => (p.$active ? "#27303c" : "#5c6470")};
  white-space: nowrap;

  svg {
    margin-right: -11px;
  }
`;

const WindowButtons = styled.span`
  display: flex;
  gap: 4px;
  margin-left: auto;
`;

const WindowButton = styled.button`
  display: grid;
  place-items: center;
  width: 15px;
  height: 13px;
  border: 1px solid #5a6b86;
  border-radius: 2px;
  background: ${(p) => (p.$close ? "#c98f90" : "#c9d9ea")};

  svg {
    margin: 0;
  }
`;

const Canvas = styled.div`
  flex: 1;
  min-height: 0;
  overflow: hidden;
  background: linear-gradient(#1e2c44 0%, #293a50 36%, #2f4056 59%, #39495f 62%, #56657a 72%, #6f7d8f 82%, #a2adc0 100%);

  svg {
    width: 100%;
    height: 100%;
  }
`;

const Dialog = styled.section`
  position: absolute;
  top: 61px;
  left: 309px;
  display: flex;
  flex-direction: column;
  width: 195px;
  height: 470px;
  padding: 0 6px 6px 5px;
  border: 1px solid #2b3646;
  border-radius: 6px;
  box-shadow: inset 0 0 0 1px #b7c5d6, 0 0 3px #0008;
  background: linear-gradient(#58677e 0%, #46566d 10%, #43536a 28%, #7088a6 29%, #8ba7ca 70%, #a8c4e6 100%);
`;

const DialogTitle = styled.header`
  display: flex;
  flex: none;
  align-items: center;
  gap: 3px;
  height: 26px;
  padding-left: 1px;

  span {
    padding: 0 3px;
    border-radius: 8px;
    background: #9aa5b580;
    box-shadow: 0 0 6px 3px #9aa5b580;
  }
`;

const DialogClose = styled.button`
  display: grid;
  place-items: center;
  align-self: flex-start;
  width: 46px;
  height: 18px;
  margin-left: auto;
  border: 1px solid #97a4b5;
  border-top: 0;
  border-radius: 0 0 5px 5px;
`;

const DialogBody = styled.div`
  display: flex;
  flex-direction: column;
  gap: 7px;
  flex: 1;
  min-height: 0;
  padding: 6px 4px;
  border: 1px solid #566;
  background: linear-gradient(100deg, #fbfcfb, #ececec);
`;

const QueryGroup = styled.fieldset`
  display: flex;
  flex-direction: column;
  flex: ${(p) => p.$rows} 1 31px;
  min-width: 0;
  min-height: 0;
  margin: 0;
  padding: 5px 4px 5px 5px;
  border: 1px solid #d9dcde;
  border-radius: 3px;

  legend {
    margin-left: 2px;
    padding: 0 4px;
    line-height: 16px;
  }
`;

const QueryList = styled.div`
  display: grid;
  grid-auto-rows: minmax(0, 1fr);
  flex: 1;
  min-height: 0;
  padding: 1px;
  border: 1px solid #a0a2a4;
  background: #fdfefd;
`;

const QueryItem = styled.button`
  padding-left: 3px;
  line-height: 16px;
  text-align: left;
  color: ${(p) => (p.$selected ? "#fff" : "inherit")};
  background: ${(p) => (p.$selected ? "#3094fb" : "none")};
`;

const StatusBar = styled.footer`
  display: flex;
  flex: none;
  gap: 4px;
  height: 21px;
  padding: 7px 6px 0 9px;
  overflow: hidden;
`;

const StatusButton = styled.button`
  display: grid;
  place-items: center;
  flex: none;
  min-width: 17px;
  height: 19px;
  padding: 0 2px;
  border: 1px solid #8e8f8f;
  border-radius: 2px;
  background: linear-gradient(#f6f6f6, #dcdcdc);
`;

const Prompt = styled.span`
  flex: 1;
  margin-left: 3px;
  line-height: 19px;
`;

const Brand = styled.span`
  display: flex;
  gap: 5px;
  flex: none;
  margin-left: 24px;
  color: #2a9c94;
  font: italic 17px/30px "DejaVu Sans", sans-serif;
`;

/* ---------- scenes ---------- */

// Outline points of each ply, top of the stack first:
// f / r are the near and right corners of the top face, fb / rb the same corners one thickness lower.
const plies = [
  { label: "Sym_Ply-1", f: [822, 249], r: [1009, 182], fb: [824, 268], rb: [1009, 200], step: 0.052, shift: [0, 0] },
  { label: "Sym_Ply-2", f: [847, 281], r: [1033, 209], fb: [850, 301], rb: [1032, 226], step: 0.083, shift: [-0.18, -0.13] },
  { label: "Sym_Ply-3", f: [874, 312], r: [1057, 237], fb: [875, 332], rb: [1056, 253], step: 0.066, shift: [0.18, 0.12] },
  { label: "Sym_Ply-4", f: [901, 345], r: [1082, 264], fb: [903, 364], rb: [1082, 280], step: 0.1, shift: [-0.35, -0.35] },
  { label: "Sym_Ply-5", f: [928, 380], r: [1107, 292], fb: [929, 398], rb: [1107, 308], along: true },
  { label: "Ply-5", f: [957, 414], r: [1133, 320], fb: [958, 432], rb: [1133, 337], along: true },
  { label: "Ply-4", f: [986, 448], r: [1160, 349], fb: [987, 468], rb: [1159, 366], step: 0.083, shift: [-0.28, -0.28] },
  { label: "Ply-3", f: [1015, 485], r: [1187, 380], fb: [1015, 503], rb: [1186, 396], step: 0.074, shift: [0.17, 0.13] },
  { label: "Ply-2", f: [1045, 522], r: [1215, 410], fb: [1045, 540], rb: [1213, 426], step: 0.072, shift: [-0.18, -0.13] },
  { label: "Ply-1", f: [1076, 560], r: [1243, 441], fb: [1076, 578], rb: [1242, 457], step: 0.055, shift: [0, 0] },
];

const leftEdge = [
  [800, 238], [802, 257], [805, 277], [808, 295], [810, 313], [813, 330],
  [815, 346], [817, 363], [820, 378], [821, 393], [824, 409],
];

const blue = { top: "#969fe0", left: "#8c9bd8", right: "#606c93" };
const tan = { top: "#d5b59c", left: "#c9ae93", right: "#857769" };

const mix = (a, b, t) => [a[0] + (b[0] - a[0]) * t, a[1] + (b[1] - a[1]) * t];
const poly = (...pts) => pts.map((p) => p.join(",")).join(" ");

function hatch(ply, far0, far1) {
  if (ply.along) {
    return [0.14, 0.48, 0.82].map((u) => [mix(far0, ply.f, u), mix(far1, ply.r, u)]);
  }
  const lines = [];
  for (let t = -0.4; t < 1.45; t += ply.step) {
    const shift = ply.shift[0] + (ply.shift[1] - ply.shift[0]) * t;
    lines.push([mix(ply.f, ply.r, t), mix(far0, far1, t + shift)]);
  }
  return lines;
}

function Ply({ index }) {
  const ply = plies[index];
  const prev = plies[index - 1];
  const color = index % 2 ? tan : blue;
  const far0 = prev ? prev.fb : leftEdge[0];
  const far1 = prev ? prev.rb : [987, 174];
  const top = poly(far0, far1, ply.r, ply.f);
  return (
    <g>
      <clipPath id={`ply-${index}`}>
        <polygon points={top} />
      </clipPath>
      <polygon points={top} fill={color.top} />
      <g clipPath={`url(#ply-${index})`} stroke="#d42c44">
        {hatch(ply, far0, far1).map(([a, b], i) => (
          <line key={i} x1={a[0]} y1={a[1]} x2={b[0]} y2={b[1]} />
        ))}
      </g>
      <polygon points={poly(leftEdge[index], far0, ply.f, ply.fb, leftEdge[index + 1])} fill={color.left} />
      <polygon points={poly(ply.f, ply.r, ply.rb, ply.fb)} fill={color.right} />
      <text x={ply.r[0] - 1} y={ply.r[1] + 12} fill="#e8ee3c" stroke="#e8ee3c" strokeWidth=".3">{ply.label}</text>
    </g>
  );
}

const PlyScene = () => (
  <svg viewBox="778 170 494 523" preserveAspectRatio="xMinYMin slice" fontFamily="DejaVu Sans, sans-serif" fontSize="7">
    <g fill="#cc1c2c" stroke="#cc1c2c" strokeWidth=".3">
      {leftEdge.slice(0, 10).map(([x, y], i) => (
        <text key={i} x={x - 24} y={y + 12}>t = 0.1</text>
      ))}
    </g>
    {plies.map((p, i) => <Ply key={p.label} index={plies.length - 1 - i} />)}
    <g transform="translate(770 140) scale(.3333)" stroke="#d9cdf0" strokeWidth="5" strokeLinejoin="round">
      <path d="M1256 255q45-4 64 48q14 36 5 57h-8l-61-35z" fill="#08086c" />
      <path d="M1333 278v-63q20-12 42 0q14 14 15 32z" fill="#14525c" />
      <path d="M1335 282l56-35q28 22 22 52q-8 20-28 12z" fill="#14525c" />
      <path d="M1290 306l114-65" />
      <circle cx="1405" cy="240" r="5" fill="#d9cdf0" />
      <path d="M1278 298h19v20h-19z" fill="#c8141c" stroke="none" />
    </g>
    <g fill="#e8ee3c" fontSize="7">
      <text x="1211" y="208">Z</text>
      <text x="1241" y="219">Y</text>
      <text x="1235" y="250">X</text>
    </g>
    <g strokeWidth="3">
      <path d="M817 647l13-7" stroke="#12941c" />
      <path d="M838 634l-6 9-5-7z" fill="#12a01c" />
      <path d="M817 647v-16" stroke="#1212a0" />
      <path d="M817 623l5 10h-10z" fill="#1212b4" />
      <path d="M817 647l13 7" stroke="#b41418" />
      <path d="M838 658l-11-1 5-8z" fill="#c4181c" />
    </g>
    <g fill="#f4f03c" fontSize="9" fontWeight="bold">
      <text x="813" y="617">3</text>
      <text x="840" y="633">2</text>
      <text x="841" y="665">1</text>
    </g>
    <g fill="#fff">
      <text x="845" y="615">Layup: 'CompositeLayup-1'</text>
      <text x="845" y="623">Total thickness: 1.000000.</text>
      <text x="845" y="631">Plot of plies 1 to 10, of 10.</text>
    </g>
    <path d="M800 414v15l4-3 3 6 2-1-3-6h5z" fill="#fff" stroke="#222" strokeWidth=".7" />
  </svg>
);

const PipeScene = () => (
  <svg viewBox="273 170 495 523" preserveAspectRatio="xMinYMin slice" fontFamily="DejaVu Sans, sans-serif">
    <defs>
      <linearGradient id="skin" x1="0" y1="0" x2="0" y2="1">
        <stop offset="0" stopColor="#86514b" />
        <stop offset=".4" stopColor="#7d4a43" />
        <stop offset=".8" stopColor="#87564e" />
        <stop offset="1" stopColor="#a08478" />
      </linearGradient>
      <pattern id="dots" width="2" height="2" patternUnits="userSpaceOnUse">
        <path d="M0 0h1v1H0zM1 1h1v1H1z" fill="#a3473f" opacity=".45" />
      </pattern>
      <path id="pipe" d="M423 425a53 54 0 1 0 106 0a53 54 0 1 0-106 0zM495 423a35 35 0 1 0 70 0a35 35 0 1 0-70 0z" />
    </defs>
    <path d="M500 376l36 12-20 6zM504 471l36-13-24-4z" fill="#80544c" />
    <use href="#pipe" fill="url(#skin)" fillRule="evenodd" />
    <use href="#pipe" fill="url(#dots)" fillRule="evenodd" />
    <use href="#pipe" fill="none" stroke="#e01c20" strokeWidth="1.5" />
    <path d="M500 376l36 12" stroke="#a06058" strokeDasharray="2 1" />
    <path d="M315 647l-20-1" stroke="#12941c" strokeWidth="3" />
    <path d="M283 645l12-5v10z" fill="#12a01c" />
    <path d="M312 648l-1 18" stroke="#b41418" strokeWidth="3" />
    <path d="M310 676l-5-12h10z" fill="#a81418" />
    <circle cx="316" cy="646" r="4" fill="#1c20c8" />
    <g fill="#fff" fontSize="9" fontWeight="bold">
      <text x="268" y="647">Y</text>
      <text x="305" y="689">X</text>
    </g>
  </svg>
);

/* ---------- content ---------- */

const menus = [
  ["", "F", "ile"], ["", "M", "odel"], ["Vie", "w", "port"], ["", "V", "iew"], ["Mat", "e", "rial"],
  ["", "S", "ection"], ["", "P", "rofile"], ["", "C", "omposite"], ["", "A", "ssign"], ["Specia", "l", ""],
  ["Feat", "u", "re"], ["", "T", "ools"], ["Plu", "g", "-ins"], ["", "H", "elp"],
];

// [level, label, icon, expander]
const tree = [
  [0, "Models (1)", "models", "open"],
  [1, "Model-1", null, "open"],
  [2, "Parts (1)", "partL", "shut"],
  [2, "Materials (1)", "stress", "shut"],
  [2, "Calibrations", "gauge"],
  [2, "Sections", "section"],
  [2, "Profiles", "profileRed"],
  [2, "Assembly", "models", "shut"],
  [2, "Steps (1)", "steps", "shut"],
  [2, "Field Output Requests", "output"],
  [2, "History Output Requests", "outputRed"],
  [2, "Time Points", "timePoints"],
  [2, "ALE Adaptive Mesh Constraints", "ale"],
  [2, "Interactions", "interact"],
  [2, "Interaction Properties", "interactProp"],
  [2, "Contact Controls", "contact"],
  [2, "Contact Initializations", "contactInit"],
  [2, "Contact Stabilizations", "contactStab"],
  [2, "Constraints", "constraint"],
  [2, "Connector Sections", "connector"],
  [2, "Fields", "fields", "shut"],
  [2, "Amplitudes", "amplitude"],
  [2, "Loads", "load"],
  [2, "BCs", "bc"],
  [2, "Predefined Fields", "predefined"],
  [2, "Remeshing Rules", "remesh"],
  [2, "Optimization Tasks", "optimize"],
  [2, "Sketches", "sketch"],
  [0, "Annotations (1)", "annotation", "shut"],
];

const toolbox = [
  { icons: ["stress", "table"] },
  { icons: ["section", "table", "sectionL", "table", "layers", "table", "orient", "tangent"] },
  { icons: ["profile", "table"] },
  { icons: ["solid", "table"] },
  { icons: ["shell", "table"] },
  { ruled: true, icons: ["stringer", "stringerMove", "eraser"] },
  { ruled: true, icons: ["plus", "datumAxis", "gridPlane"] },
  { ruled: true, icons: ["axisPointer", "partitionEdge", "partitionFace", "partitionCut"] },
  { ruled: true, icons: ["xyz", "csys", "planeOffset", "csysPoints"] },
];

const generalQueries = [
  "Point/Node", "Distance", "Angle", "Feature", "Shell element normals", "Beam element tangents",
  "Mesh stack orientation", "Mesh", "Element", "Mesh gaps/intersections", "Mass properties", "Geometry diagnostics",
];

const propertyQueries = [
  "Section assignments", "Regions missing sections", "Beam orientations", "Material orientations",
  "Rebar orientations", "Ply stack plot", "Disjoint ply regions",
];

const Tool = ({ name, on }) => (
  <ToolButton $on={on} aria-label={name}>
    <Icon name={name} />
  </ToolButton>
);

const Group = ({ width, gap, icons = [], children }) => (
  <ToolGroup $width={width} $gap={gap}>
    <Grip />
    {icons.map((n) => <Tool key={n} name={n} />)}
    {children}
  </ToolGroup>
);

const Combo = ({ width, value, spinner, id, label }) => (
  <ComboBox $width={width}>
    {spinner && <Spinner $live={spinner === "live"} />}
    <select id={id} aria-label={label}>
      <option>{value}</option>
    </select>
    <ComboArrow><Caret /></ComboArrow>
  </ComboBox>
);

const TreeItem = ({ item: [level, label, icon, expander] }) => {
  const box = expander && <Expander $open={expander === "open"} aria-label={`Toggle ${label}`} />;
  return (
    <TreeRow>
      {level > 0 && <Rail $line />}
      {level > 1 && <Rail />}
      <Rail $line={level === 2}>{box || <Branch />}</Rail>
      {icon && <Icon name={icon} size={17} />}
      <TreeLabel $current={level === 1}>{label}</TreeLabel>
    </TreeRow>
  );
};

const WindowControls = () => (
  <WindowButtons>
    <WindowButton aria-label="Minimize">
      <svg width="9" height="9"><path d="M1 5h7v3H1z" fill="#fff" stroke="#5a6b86" /></svg>
    </WindowButton>
    <WindowButton aria-label="Maximize">
      <svg width="9" height="9"><path d="M1 1h7v7H1z" fill="#fff" stroke="#5a6b86" /><path d="M4 4h1v1H4z" stroke="#5a6b86" /></svg>
    </WindowButton>
    <WindowButton $close aria-label="Close">
      <svg width="9" height="9"><path d="M1 1l7 7M8 1L1 8" stroke="#7c4448" strokeWidth="3.4" /><path d="M1 1l7 7M8 1L1 8" stroke="#fff" strokeWidth="2" /></svg>
    </WindowButton>
  </WindowButtons>
);

const Queries = ({ title, items }) => (
  <QueryGroup $rows={items.length}>
    <legend>{title}</legend>
    <QueryList role="listbox" aria-label={title}>
      {items.map((q, i) => (
        <QueryItem key={q} role="option" aria-selected={i === 0} $selected={i === 0}>{q}</QueryItem>
      ))}
    </QueryList>
  </QueryGroup>
);

export default function App() {
  return (
    <Window>
      <GlobalStyle />
      <TitleStrip />
      <MenuBar>
        {menus.map(([before, key, after]) => (
          <MenuItem key={before + key + after}>{before}<u>{key}</u>{after}</MenuItem>
        ))}
        <MenuItem aria-label="Context help"><Icon name="help" size={14} /></MenuItem>
      </MenuBar>

      <ToolRow>
        <Group width={162} icons={["file", "open", "save", "print", "dbIn", "dbOut"]} />
        <Group width={161} icons={["pan", "rotate", "zoom", "zoomBox", "fit", "cycle"]} />
        <Group width={85} gap={45} icons={["meshCube", "nodeCube", "greenCube"]} />
        <Group width={59} gap={171} icons={["ladder", "ladderFar"]} />
        <Group width={267} icons={["pointer"]}>
          <Combo width={103} value="All" label="Selection filter" />
          <Tool name="overlap" on />
          <Tool name="boxes" />
          <Tool name="selRect" />
          <Tool name="selShapes" />
          <Tool name="orangeBox" on />
        </Group>
        <Group width={34} icons={["info"]} />
        <Group width={192} icons={["palette"]}>
          <Combo width={119} value="Property defaults" label="Color mapping" />
          <Tool name="tanCube" />
          <ToolButton $narrow aria-label="More"><Caret /></ToolButton>
        </Group>
      </ToolRow>
      <ToolRow>
        <Group width={315} icons={["xy", "yx", "xz", "zx", "yz", "zy", "triad", "one", "two", "three", "four", "triadTurn"]} />
        <Group width={213} icons={["union", "minus", "disc", "invert", "undo", "redo", "parts", "table"]} />
        <Group width={292} icons={["pane1", "pane2", "pane3", "pane4", "linkPane"]}>
          <Divider />
          {["noteArrow", "arrow", "letter", "pointerDark", "table", "legend"].map((n) => <Tool key={n} name={n} />)}
        </Group>
        <Group width={85} icons={["wire", "hidden", "shaded"]} />
      </ToolRow>
      <ToolRow>
        <Group width={59} gap={946} icons={["partAxis", "table"]} />
      </ToolRow>

      <Workspace>
        <SidePanel>
          <Tabs role="tablist">
            <Tab role="tab" $active>Model</Tab>
            <Tab role="tab">Results</Tab>
            <Tab role="tab">Material Library</Tab>
          </Tabs>
          <TabBody>
            <TreeTools>
              <DatabaseCombo $width={100}>
                <Icon name="database" size={16} />
                <select aria-label="Database">
                  <option>Model Database</option>
                </select>
                <ComboArrow><Caret /></ComboArrow>
              </DatabaseCombo>
              {["updown", "folderUp", "links", "bulb"].map((n) => (
                <ToolButton key={n} aria-label={n}><Icon name={n} size={15} /></ToolButton>
              ))}
            </TreeTools>
            <TreeFrame>
              <Tree>
                {tree.map((item) => <TreeItem key={item[1]} item={item} />)}
              </Tree>
              <VScroll>
                <ScrollEnd aria-label="Scroll up" />
                <Thumb />
                <Track />
                <ScrollEnd $down aria-label="Scroll down" />
              </VScroll>
            </TreeFrame>
            <HScroll />
          </TabBody>
        </SidePanel>

        <ModuleArea>
          <ContextBar>
            <Field htmlFor="module">Module: <Combo id="module" width={104} value="Property" spinner="live" /></Field>
            <Field htmlFor="model">Model: <Combo id="model" width={86} value="Model-1" spinner="idle" /></Field>
            <Field htmlFor="part">Part: <Combo id="part" width={86} value="Pipe" spinner="idle" /></Field>
          </ContextBar>
          <ModuleBody>
            <Toolbox>
              {toolbox.map((g, i) => (
                <ToolboxGroup key={i} $ruled={g.ruled}>
                  {g.icons.map((n, j) => <Tool key={j} name={n} />)}
                </ToolboxGroup>
              ))}
            </Toolbox>
            <Desktop>
              <Viewport $active>
                <ViewportTitle $active>
                  <Icon name="viewport" size={13} />
                  <span>Viewport: 1</span>
                  <span>Model: Model-1</span>
                  <span>Part: Pipe</span>
                  <WindowControls />
                </ViewportTitle>
                <Canvas><PipeScene /></Canvas>
              </Viewport>
              <Viewport>
                <ViewportTitle>
                  <Icon name="viewport" size={13} />
                  <span>Viewport: 2</span>
                  <span>Ply Stack Plot</span>
                  <WindowControls />
                </ViewportTitle>
                <Canvas><PlyScene /></Canvas>
              </Viewport>
              <Dialog role="dialog" aria-label="Query">
                <DialogTitle>
                  <Icon name="query" size={15} />
                  <span>Query</span>
                  <DialogClose aria-label="Close query">
                    <svg width="10" height="9"><path d="M1 1l8 7M9 1L1 8" stroke="#fff" strokeWidth="2.4" /></svg>
                  </DialogClose>
                </DialogTitle>
                <DialogBody>
                  <Queries title="General Queries" items={generalQueries} />
                  <Queries title="Property Module Queries" items={propertyQueries} />
                </DialogBody>
              </Dialog>
            </Desktop>
          </ModuleBody>
          <StatusBar>
            <StatusButton aria-label="Previous step"><Icon name="back" size={12} /></StatusButton>
            <StatusButton aria-label="Cancel"><Icon name="cancel" size={12} /></StatusButton>
            <Prompt>Select the region to be queried for ply stack plot</Prompt>
            <StatusButton>Ply Stack Plot Options...</StatusButton>
            <Brand>
              <svg width="20" height="20" viewBox="0 0 22 20">
                <path d="M8 1q7-1 3 4l-4 3q6-1 3 5t-9 3M20 6q-8-1-5 4t-2 7" fill="none" stroke="#2a9c94" strokeWidth="1.6" />
              </svg>
              SIMULIA
            </Brand>
          </StatusBar>
        </ModuleArea>
      </Workspace>
    </Window>
  );
}
